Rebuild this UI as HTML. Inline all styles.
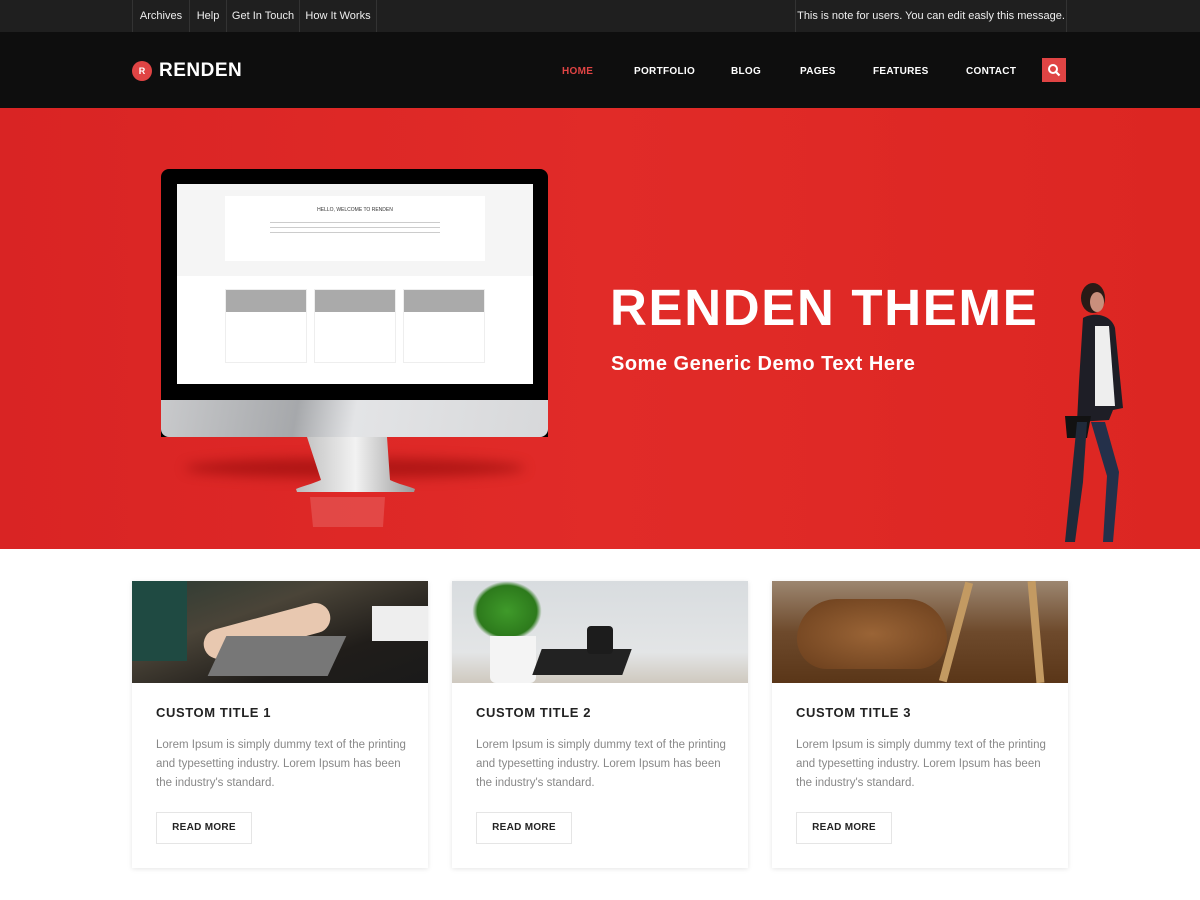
<!DOCTYPE html>
<html><head><meta charset="utf-8"><style>
*{margin:0;padding:0;box-sizing:border-box}
body{width:1200px;height:900px;overflow:hidden;background:#fff;font-family:"Liberation Sans",Arial,sans-serif;position:relative}
.abs{position:absolute}
.top{position:absolute;left:0;top:0;width:1200px;height:32px;background:#1f1f1f}
.top a{position:absolute;top:0;height:32px;line-height:32px;color:#eee;font-size:11px;text-decoration:none;text-align:center;border-left:1px solid #333;white-space:nowrap}
.hdr{position:absolute;left:0;top:32px;width:1200px;height:76px;background:#0e0e0e}
.nav{position:absolute;top:66px;color:#fff;font-size:10px;font-weight:bold;letter-spacing:.3px}
.hero{position:absolute;left:0;top:108px;width:1200px;height:441px;background:linear-gradient(90deg,#d92424,#e12b28 50%,#dc2622);overflow:hidden}
.card{position:absolute;top:581px;width:296px;height:287px;background:#fff;box-shadow:0 1px 5px rgba(0,0,0,.1)}
.card .img{height:102px;position:relative;overflow:hidden}
.card h3{position:absolute;left:24px;top:124px;font-size:13px;font-weight:bold;color:#222;letter-spacing:.6px}
.card p{position:absolute;left:24px;top:155px;width:252px;font-size:11.5px;line-height:19px;color:#888}
.card .btn{position:absolute;left:24px;top:231px;width:96px;height:32px;border:1px solid #e5e5e5;font-size:10px;font-weight:bold;color:#222;text-align:center;line-height:30px;letter-spacing:.3px}
.sc{position:absolute;background:#fff;border:1px solid #eee}
.sc .g{height:22px;background:#aaa}
</style></head><body>
<div class="top">
<a style="left:132px;width:57px">Archives</a>
<a style="left:189px;width:37px">Help</a>
<a style="left:226px;width:73px">Get In Touch</a>
<a style="left:299px;width:78px;border-right:1px solid #333">How It Works</a>
<a style="left:795px;width:272px;border-right:1px solid #333">This is note for users. You can edit easly this message.</a>
</div>
<div class="hdr"></div>
<div class="abs" style="left:132px;top:61px;width:20px;height:20px;border-radius:50%;background:#e04444;color:#fff;font-size:9px;font-weight:bold;text-align:center;line-height:20px">R</div>
<div class="abs" style="left:159px;top:60px;color:#fff;font-size:19px;font-weight:bold;letter-spacing:.5px">RENDEN</div>
<div class="nav" style="left:562px;color:#e04444">HOME</div>
<div class="nav" style="left:634px">PORTFOLIO</div>
<div class="nav" style="left:731px">BLOG</div>
<div class="nav" style="left:800px">PAGES</div>
<div class="nav" style="left:873px">FEATURES</div>
<div class="nav" style="left:966px">CONTACT</div>
<div class="abs" style="left:1042px;top:58px;width:24px;height:24px;background:#e04444">
<svg width="24" height="24"><circle cx="11" cy="11" r="4" stroke="#fff" stroke-width="2" fill="none"/><path d="M14 14l3.5 3.5" stroke="#fff" stroke-width="2.2"/></svg></div>

<div class="hero">
<div class="abs" style="left:185px;top:350px;width:340px;height:20px;background:rgba(120,0,0,.45);filter:blur(6px);border-radius:50%"></div>
<div class="abs" style="left:161px;top:61px;width:387px;height:268px;background:#000;border-radius:8px 8px 0 0"></div>
<div class="abs" style="left:161px;top:292px;width:387px;height:37px;border-radius:0 0 8px 8px;background:linear-gradient(100deg,#c9cacc,#a6a8ab 35%,#e3e4e6 50%,#d7d8da)"></div>
<div class="abs" style="left:177px;top:76px;width:356px;height:200px;background:#fff"></div>
<div class="abs" style="left:177px;top:76px;width:356px;height:92px;background:#f5f5f5"></div>
<div class="abs" style="left:225px;top:88px;width:260px;height:65px;background:#fff"></div>
<div class="abs" style="left:225px;top:99px;width:260px;text-align:center;font-size:5px;color:#333">HELLO, WELCOME TO RENDEN</div>
<div class="abs" style="left:270px;top:113px;width:170px;height:14px;background:repeating-linear-gradient(#fff 0 1px,#ccc 1px 2px,#fff 2px 5px)"></div>
<div class="sc" style="left:225px;top:181px;width:82px;height:74px"><div class="g"></div></div>
<div class="sc" style="left:314px;top:181px;width:82px;height:74px"><div class="g"></div></div>
<div class="sc" style="left:403px;top:181px;width:82px;height:74px"><div class="g"></div></div>
<svg class="abs" style="left:290px;top:329px" width="130" height="90"><defs><linearGradient id="s" x1="0" x2="1"><stop offset="0" stop-color="#bbb"/><stop offset=".5" stop-color="#f2f2f2"/><stop offset="1" stop-color="#999"/></linearGradient></defs><path d="M17 0h80l3 43c8 4 18 6 25 9l-1 3H7l-1-3c7-3 16-5 25-9z" fill="url(#s)"/><path d="M20 60h75l-2 30H23z" fill="rgba(255,255,255,.15)"/></svg>
<div class="abs" style="left:610px;top:170px;color:#fff;font-size:51px;font-weight:bold;letter-spacing:1.7px">RENDEN THEME</div>
<div class="abs" style="left:611px;top:245px;color:#fff;font-size:20px;font-weight:bold;letter-spacing:.5px">Some Generic Demo Text Here</div>
<svg class="abs" style="left:1055px;top:168px" width="90" height="273">
<ellipse cx="38" cy="22" rx="12" ry="15" fill="#2a1a16"/>
<ellipse cx="42" cy="26" rx="7" ry="10" fill="#c98f7c"/>
<path d="M28 42c10-6 28-4 32 10l8 80-10 2-4 10-32 2 2-40z" fill="#1e1e26"/>
<path d="M40 50l14 0 6 80-20 0z" fill="#eee"/>
<path d="M10 140h26l-4 22h-20z" fill="#121212"/>
<path d="M22 146l10 0 -4 60 -8 60 -10 0 6 -60z" fill="#1f2a3a"/>
<path d="M36 146l14 0 14 50 -6 70 -10 0 4 -66z" fill="#24304a"/>
</svg>
</div>

<div class="card" style="left:132px"><div class="img" style="background:linear-gradient(160deg,#2c3b33 0,#4a4438 35%,#201d1a 70%,#1a1a1a)">
<div class="abs" style="left:0;top:0;width:55px;height:80px;background:#1f4a42"></div>
<div class="abs" style="left:70px;top:35px;width:130px;height:30px;background:#e8c8b0;border-radius:20px;transform:rotate(-15deg)"></div>
<div class="abs" style="left:85px;top:55px;width:120px;height:40px;background:#777;transform:skewX(-25deg)"></div>
<div class="abs" style="left:240px;top:25px;width:56px;height:35px;background:#eee"></div>
</div><h3>CUSTOM TITLE 1</h3><p>Lorem Ipsum is simply dummy text of the printing and typesetting industry. Lorem Ipsum has been the industry's standard.</p><div class="btn">READ MORE</div></div>

<div class="card" style="left:452px"><div class="img" style="background:linear-gradient(180deg,#d8dcdf,#e3e5e6 70%,#cfc9bf)">
<div class="abs" style="left:20px;top:0;width:70px;height:60px;background:radial-gradient(#3f9a2a,#2d7a1c 60%,transparent 70%)"></div>
<div class="abs" style="left:38px;top:55px;width:46px;height:47px;background:#f4f4f4;border-radius:0 0 6px 6px"></div>
<div class="abs" style="left:85px;top:68px;width:90px;height:26px;background:#222;transform:skewX(-20deg)"></div>
<div class="abs" style="left:135px;top:45px;width:26px;height:28px;background:#1c1c1c;border-radius:4px"></div>
</div><h3>CUSTOM TITLE 2</h3><p>Lorem Ipsum is simply dummy text of the printing and typesetting industry. Lorem Ipsum has been the industry's standard.</p><div class="btn">READ MORE</div></div>

<div class="card" style="left:772px"><div class="img" style="background:linear-gradient(180deg,#9c8670,#6e4a2c 50%,#5a3618)">
<div class="abs" style="left:25px;top:18px;width:150px;height:70px;background:radial-gradient(ellipse,#9a6436,#6a3e1c);border-radius:40px 40px 30px 30px"></div>
<div class="abs" style="left:180px;top:0;width:8px;height:102px;background:#c39a62;transform:rotate(15deg)"></div>
<div class="abs" style="left:260px;top:0;width:8px;height:102px;background:#c39a62;transform:rotate(-5deg)"></div>
</div><h3>CUSTOM TITLE 3</h3><p>Lorem Ipsum is simply dummy text of the printing and typesetting industry. Lorem Ipsum has been the industry's standard.</p><div class="btn">READ MORE</div></div>
</body></html>
